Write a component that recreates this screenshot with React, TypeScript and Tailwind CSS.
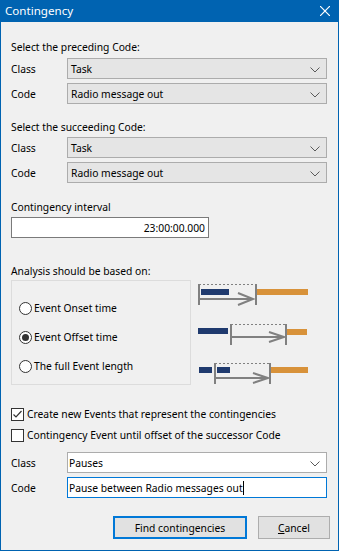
import React from "react";

const Chevron = () => (
  <svg width="10" height="6" viewBox="0 0 10 6" className="absolute right-[6px] top-[8px]">
    <polyline points="0.5,0.5 5,5 9.5,0.5" fill="none" stroke="#5a5a5a" strokeWidth="1" />
  </svg>
);

function Select({ value, white }: { value: string; white?: boolean }) {
  return (
    <div
      className={
        "relative h-[21px] w-[260px] border flex items-center " +
        (white ? "bg-white border-[#acacac] pl-[1px]" : "bg-[#e5e5e5] border-[#acacac] pl-[3px]")
      }
    >
      <span>{value}</span>
      <Chevron />
    </div>
  );
}

function Row({ label, children }: { label: string; children: React.ReactNode }) {
  return (
    <div className="flex items-center">
      <div className="w-[56px]">{label}</div>
      {children}
    </div>
  );
}

function Radio({ checked, label }: { checked?: boolean; label: string }) {
  return (
    <div className="flex items-center h-[16px]">
      <div className="ml-[7px] w-[13px] h-[13px] rounded-full border border-[#333] bg-white flex items-center justify-center">
        {checked && <div className="w-[7px] h-[7px] rounded-full bg-[#333]" />}
      </div>
      <span className="ml-[2px]">{label}</span>
    </div>
  );
}

function Check({ checked, label }: { checked?: boolean; label: string }) {
  return (
    <div className="flex items-center h-[16px]">
      <div className="w-[13px] h-[13px] border border-[#333] bg-white relative">
        {checked && (
          <svg width="11" height="11" viewBox="0 0 11 11" className="absolute left-0 top-0">
            <polyline points="1.5,5.5 4,8 9.5,2" fill="none" stroke="#333" strokeWidth="1.2" />
          </svg>
        )}
      </div>
      <span className="ml-[3px]">{label}</span>
    </div>
  );
}

function Diagrams() {
  const gray = "#808080";
  const blue = "#1f3a6e";
  const orange = "#d8923a";
  return (
    <svg width="120" height="105" viewBox="0 0 120 105">
      {/* row 1 */}
      <line x1="8" y1="4.5" x2="65" y2="4.5" stroke={gray} strokeWidth="1" strokeDasharray="2,2" />
      <rect x="7" y="4" width="2" height="21" fill={gray} />
      <rect x="10" y="9" width="28" height="6" fill={blue} />
      <rect x="9" y="18" width="53" height="2" fill={gray} />
      <polyline points="47,13 62,19 47,25" fill="none" stroke={gray} strokeWidth="2" />
      <rect x="64" y="4" width="2" height="21" fill={gray} />
      <rect x="66" y="9" width="51" height="6" fill={orange} />
      {/* row 2 */}
      <rect x="7" y="48" width="30" height="6" fill={blue} />
      <line x1="40" y1="44.5" x2="94" y2="44.5" stroke={gray} strokeWidth="1" strokeDasharray="2,2" />
      <rect x="39" y="44" width="2" height="21" fill={gray} />
      <rect x="41" y="56" width="52" height="2" fill={gray} />
      <polyline points="78,52 93,57 78,62" fill="none" stroke={gray} strokeWidth="2" />
      <rect x="94" y="44" width="2" height="21" fill={gray} />
      <rect x="96" y="49" width="20" height="6" fill={orange} />
      {/* row 3 */}
      <rect x="8" y="87" width="13" height="6" fill={blue} />
      <line x1="24" y1="83.5" x2="78" y2="83.5" stroke={gray} strokeWidth="1" strokeDasharray="2,2" />
      <rect x="23" y="83" width="2" height="21" fill={gray} />
      <rect x="26" y="87" width="13" height="6" fill={blue} />
      <rect x="25" y="97" width="52" height="2" fill={gray} />
      <polyline points="62,93 77,98 62,103" fill="none" stroke={gray} strokeWidth="2" />
      <rect x="78" y="83" width="2" height="21" fill={gray} />
      <rect x="80" y="87" width="37" height="6" fill={orange} />
    </svg>
  );
}

export default function App() {
  return (
    <div
      className="w-[339px] h-[551px] flex flex-col text-[10.3px] leading-[16px] text-black"
      style={{ fontFamily: '"Noto Sans", sans-serif' }}
    >
      <div className="h-[22px] bg-[#0063b1] flex items-center justify-between text-white shrink-0">
        <span className="ml-[5px] text-[11.6px]">Contingency</span>
        <svg width="10" height="10" viewBox="0 0 10 10" className="mr-[9px]">
          <line x1="0" y1="0" x2="10" y2="10" stroke="white" strokeWidth="1.2" />
          <line x1="10" y1="0" x2="0" y2="10" stroke="white" strokeWidth="1.2" />
        </svg>
      </div>
      <div className="flex-1 bg-[#f0f0f0] border-x border-b border-[#0063b1] pl-[10px] pt-[17px] flex flex-col">
        <div>Select the preceding Code:</div>
        <div className="mt-[3px]">
          <Row label="Class"><Select value="Task" /></Row>
        </div>
        <div className="mt-[4px]">
          <Row label="Code"><Select value="Radio message out" /></Row>
        </div>
        <div className="mt-[15px]">Select the succeeding Code:</div>
        <div className="mt-[2px]">
          <Row label="Class"><Select value="Task" /></Row>
        </div>
        <div className="mt-[4px]">
          <Row label="Code"><Select value="Radio message out" /></Row>
        </div>
        <div className="mt-[16px]">Contingency interval</div>
        <div className="mt-[2px] w-[198px] h-[21px] bg-white border border-[#7a7a7a] flex items-center justify-end pr-[3px]">
          23:00:00.000
        </div>
        <div className="mt-[25px]">Analysis should be based on:</div>
        <div className="mt-[1px] flex">
          <div className="w-[180px] h-[105px] border border-[#dcdcdc] flex flex-col pt-[19px] gap-[13px]">
            <Radio label="Event Onset time" />
            <Radio checked label="Event Offset time" />
            <Radio label="The full Event length" />
          </div>
          <Diagrams />
        </div>
        <div className="mt-[21px]">
          <Check checked label="Create new Events that represent the contingencies" />
        </div>
        <div className="mt-[5px]">
          <Check label="Contingency Event until offset of the successor Code" />
        </div>
        <div className="mt-[9px]">
          <Row label="Class"><Select white value="Pauses" /></Row>
        </div>
        <div className="mt-[4px]">
          <Row label="Code">
            <div className="h-[21px] w-[260px] bg-white border border-[#0078d7] flex items-center pl-[1px]">
              <span>Pause between Radio messages out</span>
              <span className="w-[1px] h-[14px] bg-black" />
            </div>
          </Row>
        </div>
        <div className="mt-[18px] flex">
          <div className="ml-[102px] w-[134px] h-[23px] bg-[#e1e1e1] border-2 border-[#0078d7] flex items-center justify-center">
            Find contingencies
          </div>
          <div className="ml-[11px] w-[72px] h-[23px] bg-[#e1e1e1] border border-[#adadad] flex items-center justify-center">
            <span><span className="underline">C</span>ancel</span>
          </div>
        </div>
      </div>
    </div>
  );
}
